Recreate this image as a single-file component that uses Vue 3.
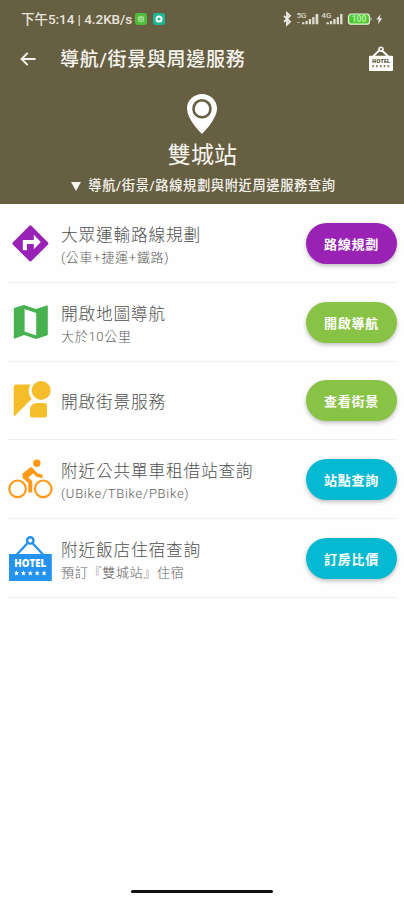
<script setup>
const rows = [
  { icon: 'route', title: '大眾運輸路線規劃', sub: '(公車+捷運+鐵路)', action: '路線規劃', tone: 'purple' },
  { icon: 'map', title: '開啟地圖導航', sub: '大於10公里', action: '開啟導航', tone: 'green' },
  { icon: 'street', title: '開啟街景服務', sub: '', action: '查看街景', tone: 'green' },
  { icon: 'bike', title: '附近公共單車租借站查詢', sub: '(UBike/TBike/PBike)', action: '站點查詢', tone: 'cyan' },
  { icon: 'hotel', title: '附近飯店住宿查詢', sub: '預訂『雙城站』住宿', action: '訂房比價', tone: 'cyan' },
]
</script>

<template>
  <div class="screen">
    <header class="header">
      <div class="status">
        <span class="clock">下午5:14 | 4.2KB/s</span>
        <svg class="chip first" viewBox="0 0 12 12"><rect width="12" height="12" rx="3" fill="#50bd3c" /><circle cx="6" cy="6" r="3.2" fill="#a4dd90" /><path d="M4.3 5.3h1M6.8 5.3h1M4.5 7.2h3" stroke="#50bd3c" /></svg>
        <svg class="chip" viewBox="0 0 12 12"><rect width="12" height="12" rx="3" fill="#20b795" /><circle cx="6" cy="6" r="2.5" fill="none" stroke="#fff" stroke-width="2" /></svg>
        <svg class="signals" viewBox="0 0 102 18">
          <path d="M1 5.8l6 6-3 2.8V3l3 2.8-6 6" fill="none" stroke="#eeece5" stroke-width="1.8" />
          <text x="13.7" y="7.8" class="net">5G</text>
          <text x="38.5" y="7.8" class="net">4G</text>
          <path d="M14 12.5h3" stroke="#aaa68f" />
          <g fill="#dedbcf">
            <path d="M19 12.3h2.3v2H19zM22.4 10.9h2.3v3.4h-2.3zM25.8 9.1h2.3v5.2h-2.3zM29.2 6.9h2.3v7.4h-2.3zM32.6 4h2.7v10.3h-2.7z" />
            <path d="M43.5 12.3h2.3v2h-2.3zM46.9 10.9h2.3v3.4h-2.3zM50.3 9.1h2.3v5.2h-2.3zM53.7 6.9H56v7.4h-2.3zM57.1 4h2.4v10.3h-2.4z" />
          </g>
          <rect x="65.5" y="4" width="21" height="10.2" rx="2.8" fill="#4bca2e" stroke="#e8f3df" stroke-width="1.2" />
          <path d="M87.6 7.2q2 2 0 4z" fill="#eeece5" />
          <text x="76" y="12.1" text-anchor="middle" class="charge">100</text>
          <path d="M97.6 4.2l-4.3 5.3h2.5l-.8 4.8 4.2-6h-2.5z" fill="#eeece5" />
        </svg>
      </div>
      <div class="bar">
        <svg class="back" viewBox="0 0 16 14"><path d="M15.6 7H1.8M7.7.9L1.6 7l6.1 6.1" fill="none" stroke="#f4f2ed" stroke-width="2" /></svg>
        <h1>導航/街景與周邊服務</h1>
        <svg class="hotel-small" viewBox="0 0 44 46">
          <path d="M8 18L21 5l14 13" fill="none" stroke="#fff" stroke-width="3.5" /><circle cx="22" cy="5" r="3.5" fill="#665f41" stroke="#fff" stroke-width="3" />
          <rect y="17" width="44" height="28" rx="1.5" fill="#fff" />
          <text x="22" y="30" text-anchor="middle" class="sign dark">HOTEL</text>
          <path d="M6 36h33" stroke="#847e68" stroke-width="4" stroke-dasharray="3 4" />
        </svg>
      </div>
      <svg class="pin" viewBox="0 0 30 40"><path fill-rule="evenodd" d="M15 0C6.7 0 0 6.5 0 14.5C0 25.5 15 40 15 40S30 25.5 30 14.5C30 6.5 23.3 0 15 0ZM15 5A9.8 9.8 0 1 1 15 24.6A9.8 9.8 0 0 1 15 5Z" fill="#fff" /><circle cx="15" cy="14.8" r="7.2" fill="#fff" /></svg>
      <h2>雙城站</h2>
      <div class="caption"><span class="triangle"></span><span>導航/街景/路線規劃與附近周邊服務查詢</span></div>
    </header>

    <main>
      <section v-for="row in rows" :key="row.title" class="row">
        <div class="icon-cell">
          <svg v-if="row.icon === 'route'" viewBox="0 0 44 44">
            <rect x="9.2" y="9.2" width="26.4" height="26.4" rx="1.8" transform="rotate(45 22.4 22.4)" fill="#9822b5" />
            <path d="M14.8 29.3V18.9H25.8V13.7L32.8 21.1 25.8 28.3V23.1H18.9V29.3z" fill="#fff" />
          </svg>
          <svg v-else-if="row.icon === 'map'" viewBox="0 0 44 44">
            <path transform="translate(0 .8)" fill-rule="evenodd" d="M6.8 6.9L16 4.3l12 4L38.6 4.8q1.2-.4 1.2.8v28.1q0 .8-1 1.1L28.1 38.2l-12-4.1L7 37.7q-1.2.4-1.2-.8V8q0-.8 1-1.1ZM16.6 8.3v22.3l11.6 4V12.2Z" fill="#48b250" />
          </svg>
          <svg v-else-if="row.icon === 'street'" viewBox="0 0 44 44">
            <path d="M8 5.5h14.7Q20.7 8 20.7 11.5q0 5 3 8.2L7.2 36.5q-1.5 1.4-1.5-.6V8q0-2.5 2.3-2.5Z" fill="#f6bd2b" />
            <circle cx="33.2" cy="11.4" r="9.5" fill="#f6bd2b" />
            <path d="M22 36.5V31q0-7 7.5-7h7q2.5 0 2.5 2.5v10q0 2-2 2H24q-2 0-2-2Z" fill="#f6bd2b" />
          </svg>
          <svg v-else-if="row.icon === 'bike'" viewBox="0 0 44 44">
            <g fill="none" stroke="#ff9817" stroke-width="2.2"><circle cx="9.6" cy="30.8" r="8.3" /><circle cx="35.2" cy="30.8" r="8.3" /></g>
            <circle cx="28.8" cy="5.3" r="3.7" fill="#ff9817" />
            <path d="M16.5 17.8L23 11.1l6.2 6 5.2 1.6" fill="none" stroke="#ff9817" stroke-width="3.3" stroke-linejoin="round" />
            <path d="M15.5 18l6.8 6V34.5" fill="none" stroke="#ff9817" stroke-width="4" stroke-linejoin="round" />
            <path d="M14 16.2L21 10.2q2-1.7 4 .2l2 3-7.3 6.8 1.5 1.8-3 1.2z" fill="#ff9817" />
          </svg>
          <svg v-else viewBox="0 0 44 44">
            <g transform="translate(0 1)">
              <path d="M8.5 18L22 3.5 35.5 18" fill="none" stroke="#2492ef" stroke-width="2.3" /><circle cx="22.3" cy="3.4" r="3.2" fill="#fff" stroke="#2492ef" stroke-width="2.4" />
              <rect x="1" y="17" width="42.8" height="27" fill="#2492ef" />
              <text x="22.3" y="30" text-anchor="middle" textLength="32" lengthAdjust="spacingAndGlyphs" class="sign">HOTEL</text>
              <g fill="#fff"><path v-for="n in 5" :key="n" d="M0-2.5L.8-.8 2.5-.6 1.2.6l.4 1.8L0 1.5-1.6 2.4-1.2.6-2.5-.6-.8-.8Z" :transform="`translate(${1.6 + n * 6.9} 36)`" /></g>
            </g>
          </svg>
        </div>
        <div class="copy">
          <div class="title">{{ row.title }}</div>
          <div v-if="row.sub" class="sub">{{ row.sub }}</div>
        </div>
        <button :class="row.tone">{{ row.action }}</button>
      </section>
    </main>
    <div class="home"></div>
  </div>
</template>

<style>
body { background: #fefefe; }
</style>

<style scoped>
.screen { box-sizing: border-box; width: 404px; height: 900px; display: flex; flex-direction: column; background: #fefefe; overflow: hidden; font-family: Roboto, "Noto Sans CJK TC", sans-serif; }
.header { height: 204px; flex: none; display: flex; flex-direction: column; align-items: center; background: #665f41; color: #f6f4ef; }
.status { width: 100%; height: 38px; display: flex; align-items: center; box-sizing: border-box; padding-left: 21px; }
.clock { width: 112px; font-size: 13.5px; line-height: 20px; white-space: nowrap; color: #e8e5dd; font-weight: 500; letter-spacing: -.05px; }
.chip { width: 12px; height: 12px; margin-left: 6px; }
.chip.first { margin-left: 2px; }
.signals { width: 102px; height: 18px; margin: 0 19px 0 auto; }
.net { font-size: 7.8px; font-weight: 500; fill: #dedbcf; }
.charge { font-size: 8.5px; font-weight: 700; fill: #b8efaa; }
.bar { width: 100%; height: 41px; box-sizing: border-box; padding: 0 11px 0 20px; display: flex; align-items: center; }
.back { width: 16px; height: 14px; }
h1 { margin: 2px auto 0 24px; font-size: 19px; line-height: 26px; letter-spacing: .7px; font-weight: 500; white-space: nowrap; }
.hotel-small { width: 24px; height: 26px; margin-top: 1px; }
.pin { width: 30px; height: 40px; margin-top: 15px; flex: none; }
h2 { margin: 7px 0 0; font-size: 23px; line-height: 30px; font-weight: 400; letter-spacing: .2px; padding-left: 1px; }
.caption { display: flex; align-items: center; gap: 7px; margin-top: 5px; padding-left: 3px; font-size: 13.3px; letter-spacing: .57px; line-height: 20px; font-weight: 500; white-space: nowrap; }
.triangle { border: 5.5px solid transparent; border-top: 9px solid #f6f4ef; border-bottom: 0; }
main { display: flex; flex-direction: column; padding: 0 7px 0 8px; }
.row { height: 78.75px; box-sizing: border-box; padding-top: 1px; border-bottom: 1px solid #f0f0f0; display: flex; align-items: center; }
.icon-cell { width: 44px; height: 44px; flex: none; }
.icon-cell svg { display: block; width: 44px; height: 44px; overflow: visible; }
.copy { margin-left: 9px; padding-top: 4px; flex: 1; white-space: nowrap; }
.title { font-size: 16.7px; line-height: 25px; letter-spacing: .8px; color: #505050; font-weight: 300; }
.sub { font-size: 13px; line-height: 20px; letter-spacing: .72px; color: #606060; font-weight: 300; }
button { width: 91px; height: 41px; flex: none; border: 0; border-radius: 21px; padding: 0; color: #fff; font-family: inherit; font-size: 13px; font-weight: 700; letter-spacing: .7px; box-shadow: 0 2px 4px rgba(0, 0, 0, .25); }
.purple { background: #9922b4; }
.green { background: #89c345; }
.cyan { background: #06b9d3; }
.sign { font-family: "Open Sans", sans-serif; font-size: 10px; font-weight: 800; fill: #fff; }
.sign.dark { fill: #665f41; }
.home { width: 142px; height: 3px; border-radius: 2px; background: #111; margin: auto auto 7.5px 130.5px; }
</style>
